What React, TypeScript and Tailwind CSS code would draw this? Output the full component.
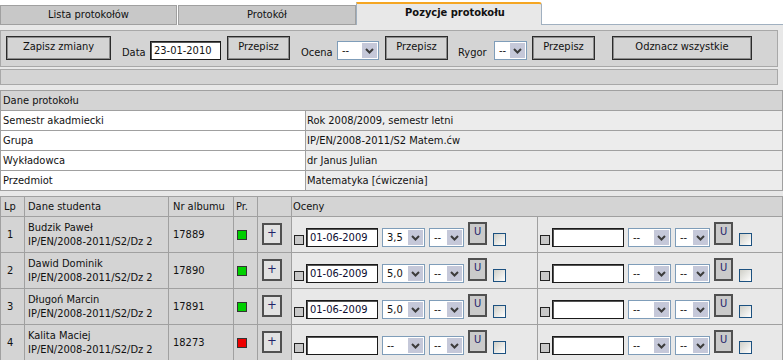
import React from "react";

const students = [
  { lp: 1, name: "Budzik Paweł", group: "IP/EN/2008-2011/S2/Dz 2", album: "17889", ok: true, date: "01-06-2009", grade: "3,5" },
  { lp: 2, name: "Dawid Dominik", group: "IP/EN/2008-2011/S2/Dz 2", album: "17890", ok: true, date: "01-06-2009", grade: "5,0" },
  { lp: 3, name: "Długoń Marcin", group: "IP/EN/2008-2011/S2/Dz 2", album: "17891", ok: true, date: "01-06-2009", grade: "5,0" },
  { lp: 4, name: "Kalita Maciej", group: "IP/EN/2008-2011/S2/Dz 2", album: "18273", ok: false, date: "", grade: "--" },
];

const details = [
  ["Semestr akadmiecki", "Rok 2008/2009, semestr letni"],
  ["Grupa", "IP/EN/2008-2011/S2 Matem.ćw"],
  ["Wykładowca", "dr Janus Julian"],
  ["Przedmiot", "Matematyka [ćwiczenia]"],
];

function Chevron() {
  return (
    <svg width="9" height="6" viewBox="0 0 9 6">
      <path d="M1 1 L4.5 4.5 L8 1" fill="none" stroke="#3c3c3c" strokeWidth="2" />
    </svg>
  );
}

function Select({ width, value }: { width: string; value: string }) {
  return (
    <div className={`flex h-[19px] shrink-0 border border-[#7f9db9] bg-white ${width}`}>
      <span className="flex-1 pl-[4px] leading-[17px]">{value}</span>
      <span className="flex w-[17px] items-center justify-center border border-white bg-[#c5c8d9]">
        <Chevron />
      </span>
    </div>
  );
}

function ToolButton({ width, children, className = "" }: { width: string; children: React.ReactNode; className?: string }) {
  return (
    <button
      className={`h-[24px] shrink-0 border border-[#2b2b2b] bg-[#d4d4d4] pb-[3px] text-[#111] shadow-[inset_1px_1px_0_#8c8c8c,inset_-1px_-1px_0_#8c8c8c] ${width} ${className}`}
    >
      {children}
    </button>
  );
}

function GradeSlot({ date, grade }: { date: string; grade: string }) {
  return (
    <div className="flex items-end pl-[2px]">
      <span className="mb-[2px] h-[10px] w-[10px] shrink-0 border border-[#222] bg-[#c8c8c8]" />
      <div className="ml-[2px] h-[19px] w-[72px] shrink-0 border border-[#1a1a1a] bg-white pl-[3px] leading-[17px] text-[#0a0a30] shadow-[inset_1px_1px_0_#555]">
        {date}
      </div>
      <div className="ml-[4px]">
        <Select width="w-[43px]" value={grade} />
      </div>
      <div className="ml-[4px]">
        <Select width="w-[35px]" value="--" />
      </div>
      <button className="mb-[2px] ml-[4px] h-[23px] w-[19px] shrink-0 border-2 border-[#505050] bg-[#cacaca] pb-[4px] text-[#24246a]">
        U
      </button>
      <span className="mb-[1px] ml-[6px] h-[13px] w-[13px] shrink-0 border border-[#1c5180] bg-linear-to-br from-[#cfcfc8] to-white" />
    </div>
  );
}

export default function App() {
  return (
    <div className="h-[360px] w-[783px] overflow-hidden bg-[#e8e8e8] text-[11px] leading-[14px] text-[#111] [font-family:'DejaVu_Sans_Condensed','Liberation_Sans',sans-serif]">
      {/* Tabs */}
      <div className="flex h-[25px] bg-white">
        <div className="mt-[5px] flex w-[177px] items-center justify-center border border-[#a0a0a0] bg-[#c8c8c8] pb-[1px]">
          Lista protokołów
        </div>
        <div className="ml-[1px] mt-[5px] flex w-[178px] items-center justify-center border border-[#a0a0a0] bg-[#c8c8c8] pb-[1px]">
          Protokół
        </div>
        <div className="mt-[2px] flex w-[186px] items-center justify-center rounded-tr-[3px] border-x border-t-2 border-x-[#a0b0c0] border-t-[#f5a623] bg-[#e8e8e8] pb-[3px] pl-[12px] font-bold">
          Pozycje protokołu
        </div>
        <div className="flex-1 border-b border-[#a0b0c0]" />
      </div>

      {/* Toolbar */}
      <div className="mt-[5px] flex h-[37px] w-[778px] items-end border border-[#a8a8a8] bg-[#d4d4d4] pb-[6px] pl-[5px]">
        <ToolButton width="w-[105px]">Zapisz zmiany</ToolButton>
        <span className="ml-[11px] w-[28px]">Data</span>
        <div className="h-[19px] w-[71px] shrink-0 border border-[#1a1a1a] bg-white pl-[3px] leading-[17px] shadow-[inset_1px_1px_0_#555]">
          23-01-2010
        </div>
        <ToolButton width="w-[63px]" className="ml-[6px]">Przepisz</ToolButton>
        <span className="ml-[11px] w-[36px]">Ocena</span>
        <Select width="w-[42px]" value="--" />
        <ToolButton width="w-[63px]" className="ml-[6px]">Przepisz</ToolButton>
        <span className="ml-[10px] w-[36px]">Rygor</span>
        <Select width="w-[33px]" value="--" />
        <ToolButton width="w-[63px]" className="ml-[5px]">Przepisz</ToolButton>
        <ToolButton width="w-[140px]" className="ml-[17px]">Odznacz wszystkie</ToolButton>
      </div>
      <div className="mt-[2px] h-[16px] w-[778px] border border-[#a8a8a8] bg-[#d4d4d4]" />

      {/* Dane protokołu */}
      <div className="mt-[5px] grid grid-cols-[305px_1fr] border-l border-t border-[#a0a0a0]">
        <div className="col-span-2 flex h-[20px] items-center border-b border-r border-[#a0a0a0] bg-[#d4d4d4] pl-[2px]">
          Dane protokołu
        </div>
        {details.map(([label, value]) => (
          <React.Fragment key={label}>
            <div className="flex h-[20px] items-center border-b border-r border-[#a0a0a0] bg-white pl-[2px]">{label}</div>
            <div className="flex h-[20px] items-center border-b border-r border-[#a0a0a0] bg-[#ececec] pl-[1px]">{value}</div>
          </React.Fragment>
        ))}
      </div>

      {/* Students */}
      <div className="mt-[5px] grid grid-cols-[24px_144px_65px_24px_34px_246px_1fr] border-l border-t border-[#a0a0a0]">
        {["Lp", "Dane studenta", "Nr albumu", "Pr.", ""].map((h, i) => (
          <div
            key={i}
            className={`flex h-[20px] items-center border-b border-r border-[#a0a0a0] bg-[#d4d4d4] ${i === 3 ? "pl-[2px]" : i === 2 ? "pl-[4px]" : "pl-[3px]"}`}
          >
            {h}
          </div>
        ))}
        <div className="col-span-2 flex h-[20px] items-center border-b border-r border-[#a0a0a0] bg-[#d4d4d4] pl-[1px]">
          Oceny
        </div>

        {students.map((s) => (
          <React.Fragment key={s.lp}>
            <div className="flex h-[36px] items-center border-b border-r border-[#a0a0a0] bg-[#d4d4d4] pl-[6px]">{s.lp}</div>
            <div className="flex h-[36px] flex-col justify-center border-b border-r border-[#a0a0a0] bg-[#d4d4d4] pl-[3px]">
              <span>{s.name}</span>
              <span>{s.group}</span>
            </div>
            <div className="flex h-[36px] items-center border-b border-r border-[#a0a0a0] bg-[#d4d4d4] pl-[4px]">{s.album}</div>
            <div className="flex h-[36px] items-center border-b border-r border-[#a0a0a0] bg-[#d4d4d4] pl-[3px]">
              <span className={`h-[10px] w-[10px] border border-[#333] ${s.ok ? "bg-[#00d000]" : "bg-[#ee0000]"}`} />
            </div>
            <div className="flex h-[36px] items-center border-b border-r border-[#a0a0a0] bg-[#d4d4d4] pl-[4px]">
              <button className="mb-[2px] h-[22px] w-[20px] border-2 border-[#505050] bg-[#e2e2e2] pb-[2px] text-[13px] text-[#24246a]">
                +
              </button>
            </div>
            <div className="flex h-[36px] items-center border-b border-r border-[#a0a0a0] bg-[#e8e8e8]">
              <GradeSlot date={s.date} grade={s.grade} />
            </div>
            <div className="flex h-[36px] items-center border-b border-r border-[#a0a0a0] bg-[#e8e8e8]">
              <GradeSlot date="" grade="--" />
            </div>
          </React.Fragment>
        ))}
      </div>
    </div>
  );
}
